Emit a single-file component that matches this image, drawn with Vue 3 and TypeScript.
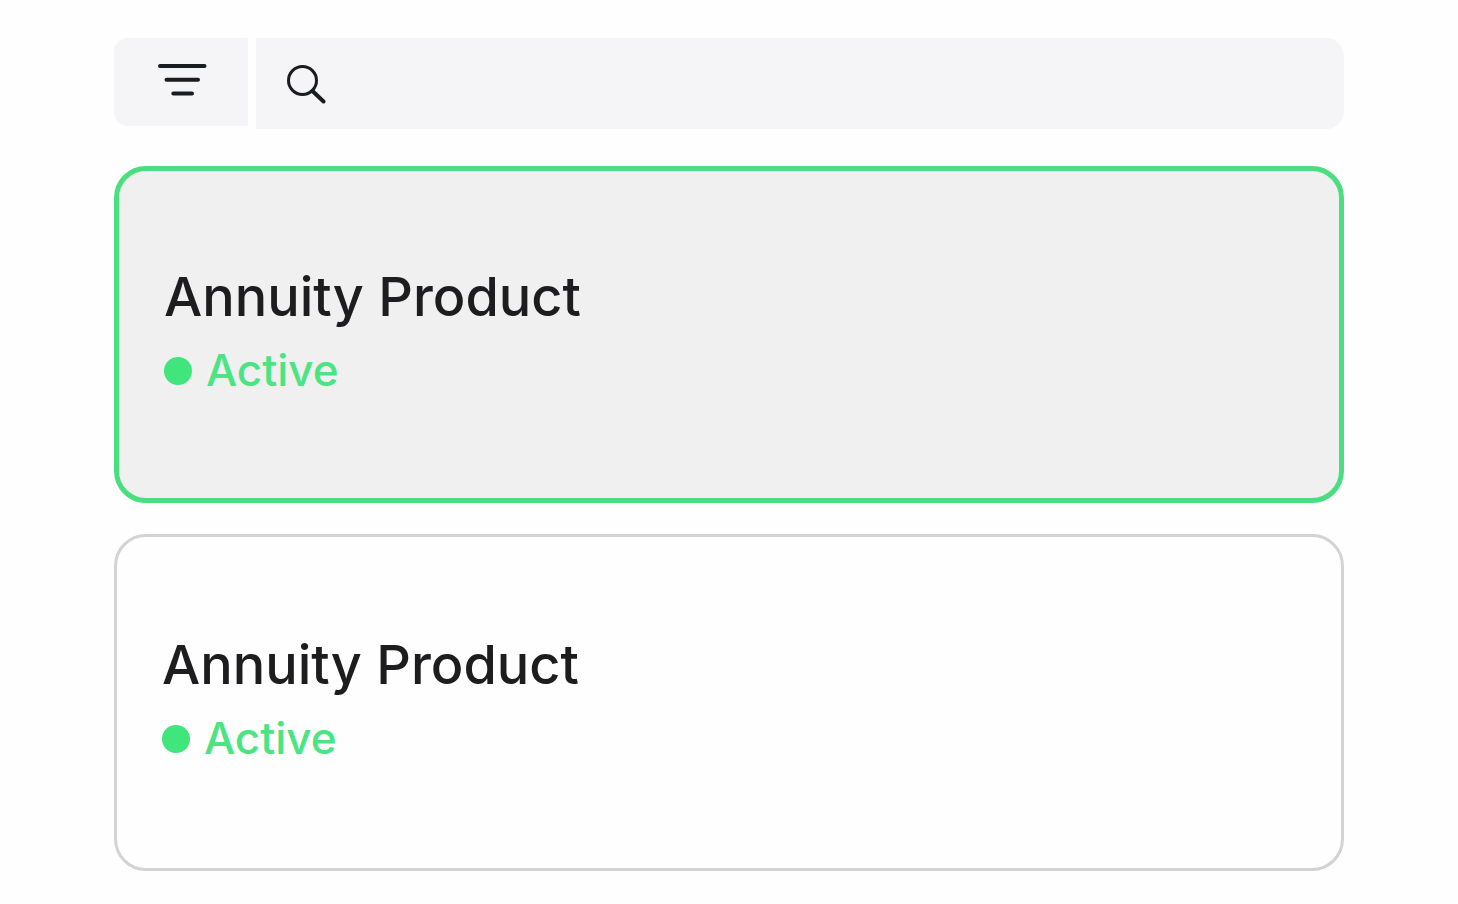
<script setup lang="ts">
import { ref } from 'vue'

interface Product {
  id: number
  name: string
  status: string
}

const products: Product[] = [
  { id: 1, name: 'Annuity Product', status: 'Active' },
  { id: 2, name: 'Annuity Product', status: 'Active' },
]

const selectedId = ref(1)
const query = ref('')
</script>

<template>
  <main class="page">
    <div class="toolbar">
      <button class="filter" type="button" aria-label="Filter products">
        <svg width="50" height="36" viewBox="0 0 50 36" fill="none" stroke="#1b1c1f" stroke-width="4" stroke-linecap="round" aria-hidden="true">
          <path d="M3 4H47.500M9.500 17.800H41M16.300 31.500H35" />
        </svg>
      </button>
      <label class="search">
        <svg width="40" height="40" viewBox="0 0 40 40" fill="none" stroke="#1b1c1f" aria-hidden="true">
          <circle cx="16.500" cy="16.500" r="14" stroke-width="3" />
          <path d="M26.500 27L37.500 37.500" stroke-width="4" stroke-linecap="round" />
        </svg>
        <input v-model="query" type="search" aria-label="Search products" />
      </label>
    </div>

    <button
      v-for="product in products"
      :key="product.id"
      type="button"
      class="card"
      :class="{ selected: product.id === selectedId }"
      :aria-pressed="product.id === selectedId"
      @click="selectedId = product.id"
    >
      <span class="name">{{ product.name }}</span>
      <span class="status"><span class="dot"></span>{{ product.status }}</span>
    </button>
  </main>
</template>

<style>
body {
  margin: 0;
  background: #fefefe;
}
</style>

<style scoped>
.page {
  display: flex;
  flex-direction: column;
  gap: 31px;
  padding: 38px 114px 33px;
  font-family: Inter, "Liberation Sans", sans-serif;
}

.toolbar {
  display: flex;
  align-items: flex-start;
  gap: 8px;
  margin-bottom: 6px;
}

.filter {
  display: flex;
  justify-content: center;
  align-items: center;
  width: 134px;
  height: 88px;
  padding: 0 0 4px 2px;
  border: 0;
  border-radius: 14px 0 0 14px;
  background: #f5f5f8;
}

.search {
  display: flex;
  flex: 1;
  align-items: center;
  gap: 20px;
  height: 91px;
  box-sizing: border-box;
  padding: 0 30px;
  border-radius: 0 18px 18px 0;
  background: #f5f5f7;
}

.search input {
  flex: 1;
  min-width: 0;
  padding: 0;
  border: 0;
  outline: 0;
  background: transparent;
  color: #1d1d1f;
  font: inherit;
  font-size: 40px;
}

.card {
  display: flex;
  flex-direction: column;
  justify-content: center;
  align-items: flex-start;
  gap: 13px;
  box-sizing: border-box;
  min-height: 337px;
  padding: 0 45px 7px;
  border: 3px solid #d3d3d3;
  border-radius: 32px;
  background: #fefefe;
  font: inherit;
  text-align: left;
}

.card.selected {
  border: 5px solid #4ade80;
  background: #f0f0f0;
}

.name {
  color: #1d1d1f;
  font-size: 54px;
  font-weight: 500;
  line-height: 64px;
}

.status {
  display: flex;
  align-items: center;
  gap: 14px;
  color: #4ae582;
  font-size: 44px;
  font-weight: 500;
  line-height: 56px;
}

.dot {
  width: 28px;
  height: 28px;
  margin-top: 3px;
  border-radius: 50%;
  background: #40e57c;
}
</style>
